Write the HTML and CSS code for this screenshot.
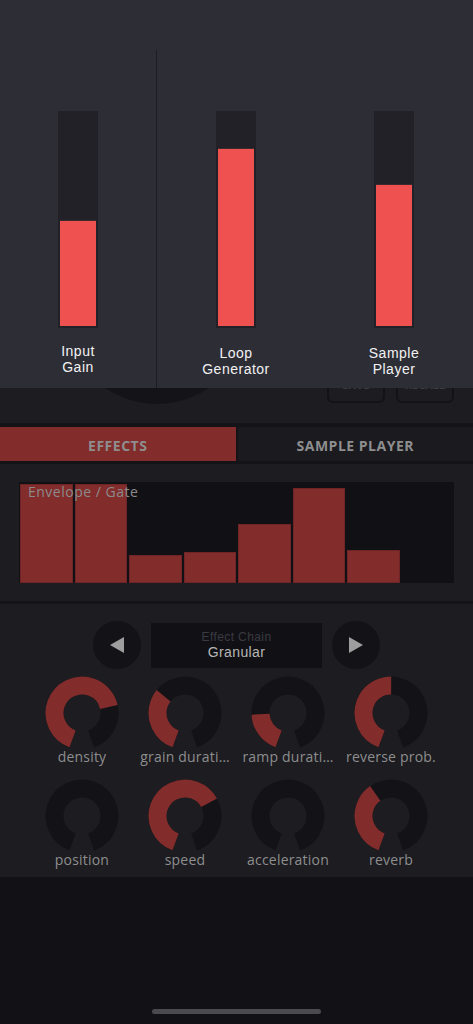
FILE: index.html
```html
<!DOCTYPE html>
<html lang="en">
<head>
<meta charset="utf-8">
<title>Granular</title>
<link rel="stylesheet" href="styles.css">
</head>
<body>
<div class="app">
  <header class="header">
    <div class="big-knob"></div>
    <div class="header-buttons">
      <button class="hbtn">SAVE</button>
      <button class="hbtn">RECALL</button>
    </div>
  </header>

  <nav class="tabs">
    <div class="tab tab-active">EFFECTS</div>
    <div class="tab">SAMPLE PLAYER</div>
  </nav>

  <section class="envelope">
    <div class="graph">
      <span class="graph-label">Envelope / Gate</span>
      <div class="bar" style="height:99px"></div>
      <div class="bar" style="height:99px"></div>
      <div class="bar" style="height:28px"></div>
      <div class="bar" style="height:31px"></div>
      <div class="bar" style="height:59px"></div>
      <div class="bar" style="height:95px"></div>
      <div class="bar" style="height:33px"></div>
      <div class="bar bar-empty" style="height:0px"></div>
    </div>
  </section>

  <section class="effects">
    <div class="chain">
      <button class="chain-btn" aria-label="Previous">
        <svg width="14" height="16" viewBox="0 0 14 16"><path d="M0 8 L14 0 L14 16 Z"/></svg>
      </button>
      <div class="chain-box">
        <div class="chain-caption">Effect Chain</div>
        <div class="chain-name">Granular</div>
      </div>
      <button class="chain-btn" aria-label="Next">
        <svg width="14" height="16" viewBox="0 0 14 16"><path d="M14 8 L0 0 L0 16 Z"/></svg>
      </button>
    </div>

    <div class="knobs">
      <div class="knob">
        <svg class="knob-svg" viewBox="0 0 74 74"><g transform="rotate(110 37 37)"><circle class="knob-track" cx="37" cy="37" r="27.5" stroke-dasharray="153.59 172.79"/><circle class="knob-value" cx="37" cy="37" r="27.5" stroke-dasharray="113.7 172.79"/></g></svg>
        <div class="knob-label">density</div>
      </div>
      <div class="knob">
        <svg class="knob-svg" viewBox="0 0 74 74"><g transform="rotate(110 37 37)"><circle class="knob-track" cx="37" cy="37" r="27.5" stroke-dasharray="153.59 172.79"/><circle class="knob-value" cx="37" cy="37" r="27.5" stroke-dasharray="52.2 172.79"/></g></svg>
        <div class="knob-label">grain durati…</div>
      </div>
      <div class="knob">
        <svg class="knob-svg" viewBox="0 0 74 74"><g transform="rotate(110 37 37)"><circle class="knob-track" cx="37" cy="37" r="27.5" stroke-dasharray="153.59 172.79"/><circle class="knob-value" cx="37" cy="37" r="27.5" stroke-dasharray="32.3 172.79"/></g></svg>
        <div class="knob-label">ramp durati…</div>
      </div>
      <div class="knob">
        <svg class="knob-svg" viewBox="0 0 74 74"><g transform="rotate(110 37 37)"><circle class="knob-track" cx="37" cy="37" r="27.5" stroke-dasharray="153.59 172.79"/><circle class="knob-value" cx="37" cy="37" r="27.5" stroke-dasharray="76.8 172.79"/></g></svg>
        <div class="knob-label">reverse prob.</div>
      </div>
      <div class="knob">
        <svg class="knob-svg" viewBox="0 0 74 74"><g transform="rotate(110 37 37)"><circle class="knob-track" cx="37" cy="37" r="27.5" stroke-dasharray="153.59 172.79"/></g></svg>
        <div class="knob-label">position</div>
      </div>
      <div class="knob">
        <svg class="knob-svg" viewBox="0 0 74 74"><g transform="rotate(110 37 37)"><circle class="knob-track" cx="37" cy="37" r="27.5" stroke-dasharray="153.59 172.79"/><circle class="knob-value" cx="37" cy="37" r="27.5" stroke-dasharray="106 172.79"/></g></svg>
        <div class="knob-label">speed</div>
      </div>
      <div class="knob">
        <svg class="knob-svg" viewBox="0 0 74 74"><g transform="rotate(110 37 37)"><circle class="knob-track" cx="37" cy="37" r="27.5" stroke-dasharray="153.59 172.79"/></g></svg>
        <div class="knob-label">acceleration</div>
      </div>
      <div class="knob">
        <svg class="knob-svg" viewBox="0 0 74 74"><g transform="rotate(110 37 37)"><circle class="knob-track" cx="37" cy="37" r="27.5" stroke-dasharray="153.59 172.79"/><circle class="knob-value" cx="37" cy="37" r="27.5" stroke-dasharray="59.9 172.79"/></g></svg>
        <div class="knob-label">reverb</div>
      </div>
    </div>
  </section>

  <div class="footer"><div class="home-indicator"></div></div>

  <div class="overlay">
    <div class="ov-col ov-col-first">
      <div class="meter"><div class="meter-fill" style="height:106px"></div></div>
      <div class="meter-label meter-label-first"><span class="ml-line">Input</span><span class="ml-line">Gain</span></div>
    </div>
    <div class="ov-divider"></div>
    <div class="ov-col">
      <div class="meter"><div class="meter-fill" style="height:178px"></div></div>
      <div class="meter-label"><span class="ml-line">Loop</span><span class="ml-line">Generator</span></div>
    </div>
    <div class="ov-col">
      <div class="meter"><div class="meter-fill" style="height:142px"></div></div>
      <div class="meter-label"><span class="ml-line">Sample</span><span class="ml-line">Player</span></div>
    </div>
  </div>
</div>
</body>
</html>
```

FILE: styles.css
```css
* { box-sizing: border-box; }

html, body {
  margin: 0;
  padding: 0;
  background: #111116;
}

body {
  font-family: "Open Sans", "Noto Sans", "Liberation Sans", sans-serif;
  width: 473px;
}

.app {
  position: relative;
  min-height: 1024px;
  display: flex;
  flex-direction: column;
}

/* header (mostly hidden under overlay) */
.header {
  height: 423px;
  background: #1c1c21;
  display: flex;
  align-items: flex-end;
  padding: 0 19px 19px 66px;
}

.big-knob {
  width: 182px;
  height: 182px;
  border-radius: 50%;
  background: #141418;
}

.header-buttons {
  margin-left: auto;
  display: flex;
  gap: 11px;
  margin-bottom: 1px;
}

.hbtn {
  width: 58px;
  height: 32px;
  background: transparent;
  border: 2px solid #131317;
  border-radius: 6px;
  color: #3c3c43;
  font-family: inherit;
  font-weight: 700;
  font-size: 11px;
  padding: 0 0 6px;
}

/* tabs */
.tabs {
  display: flex;
  gap: 2px;
  background: #141418;
  border-top: 4px solid #141418;
  border-bottom: 3px solid #141418;
}

.tab {
  flex: 1;
  height: 34px;
  padding-top: 3px;
  display: flex;
  align-items: center;
  justify-content: center;
  background: #1a1a1f;
  color: #8e8e8e;
  font-weight: 700;
  font-size: 14px;
  letter-spacing: 0.5px;
}

.tab-active {
  background: #822c2c;
}

/* envelope */
.envelope {
  background: #1c1c21;
  padding: 18px 19px;
  border-bottom: 3px solid #141418;
}

.graph {
  position: relative;
  height: 101px;
  background: #111115;
  display: flex;
  align-items: flex-end;
  gap: 2px;
  padding-left: 1px;
}

.graph-label {
  position: absolute;
  left: 9px;
  top: 0;
  font-size: 14px;
  line-height: 20px;
  letter-spacing: 0.5px;
  color: #8b8b8b;
  z-index: 1;
}

.bar {
  flex: 1;
  background: #822c2c;
  box-shadow: inset 0 0 0 1px #6f2525;
}

.bar-empty {
  background: transparent;
  box-shadow: none;
}

/* effects */
.effects {
  background: #1c1c21;
  padding: 17px 0 9px;
}

.chain {
  display: flex;
  justify-content: center;
  align-items: center;
  gap: 10px;
}

.chain-btn {
  width: 48px;
  height: 48px;
  border-radius: 50%;
  border: none;
  background: #131317;
  display: flex;
  align-items: center;
  justify-content: center;
  padding: 0;
}

.chain-btn svg path {
  fill: #9e9e9e;
}

.chain-box {
  width: 171px;
  height: 45px;
  background: #111115;
  display: flex;
  flex-direction: column;
  align-items: center;
  justify-content: center;
  font-family: "Liberation Sans", Arial, sans-serif;
}

.chain-caption {
  font-size: 12px;
  line-height: 14px;
  height: 14px;
  letter-spacing: 0.4px;
  color: #3a3a42;
}

.chain-name {
  font-size: 14px;
  line-height: 16px;
  height: 16px;
  letter-spacing: 0.4px;
  color: #b6b6b6;
}

.knobs {
  margin-top: 7px;
  display: grid;
  grid-template-columns: repeat(4, 103px);
  justify-content: center;
  row-gap: 14px;
}

.knob {
  display: flex;
  flex-direction: column;
  align-items: center;
}

.knob-svg {
  display: block;
  width: 74px;
  height: 74px;
}

.knob-track {
  fill: none;
  stroke: #131317;
  stroke-width: 18;
}

.knob-value {
  fill: none;
  stroke: #822c2c;
  stroke-width: 18;
}

.knob-label {
  font-size: 14px;
  line-height: 16px;
  margin-top: -1px;
  color: #8e8e8e;
  letter-spacing: 0.2px;
  white-space: nowrap;
}

/* footer */
.footer {
  flex: 1;
  display: flex;
  align-items: flex-end;
  justify-content: center;
  padding-bottom: 10px;
}

.home-indicator {
  width: 169px;
  height: 5px;
  border-radius: 3px;
  background: #4a4a4f;
}

/* overlay with meters */
.overlay {
  position: absolute;
  top: 0;
  left: 0;
  right: 0;
  height: 388px;
  background: #2d2d36;
  display: flex;
}

.ov-col {
  flex: 1;
  display: flex;
  flex-direction: column;
  align-items: center;
  padding-top: 111px;
}

.ov-col-first {
  flex: 0 0 156px;
}

.ov-divider {
  width: 1px;
  margin-top: 50px;
  background: #1d1d23;
}

.meter {
  width: 40px;
  height: 217px;
  padding: 2px;
  background: #212127;
  display: flex;
  flex-direction: column;
  justify-content: flex-end;
}

.meter-fill {
  background: #ef5050;
  border-top: 1px solid #3b2a30;
}

.meter-label {
  margin-top: 17px;
  display: flex;
  flex-direction: column;
  align-items: center;
  color: #f2f2f2;
  text-align: center;
  font-family: "Liberation Sans", Arial, sans-serif;
  letter-spacing: 0.5px;
}

.ml-line {
  display: block;
  font-size: 14px;
  line-height: 16px;
  height: 16px;
}

.meter-label-first {
  margin-top: 15px;
}
```
